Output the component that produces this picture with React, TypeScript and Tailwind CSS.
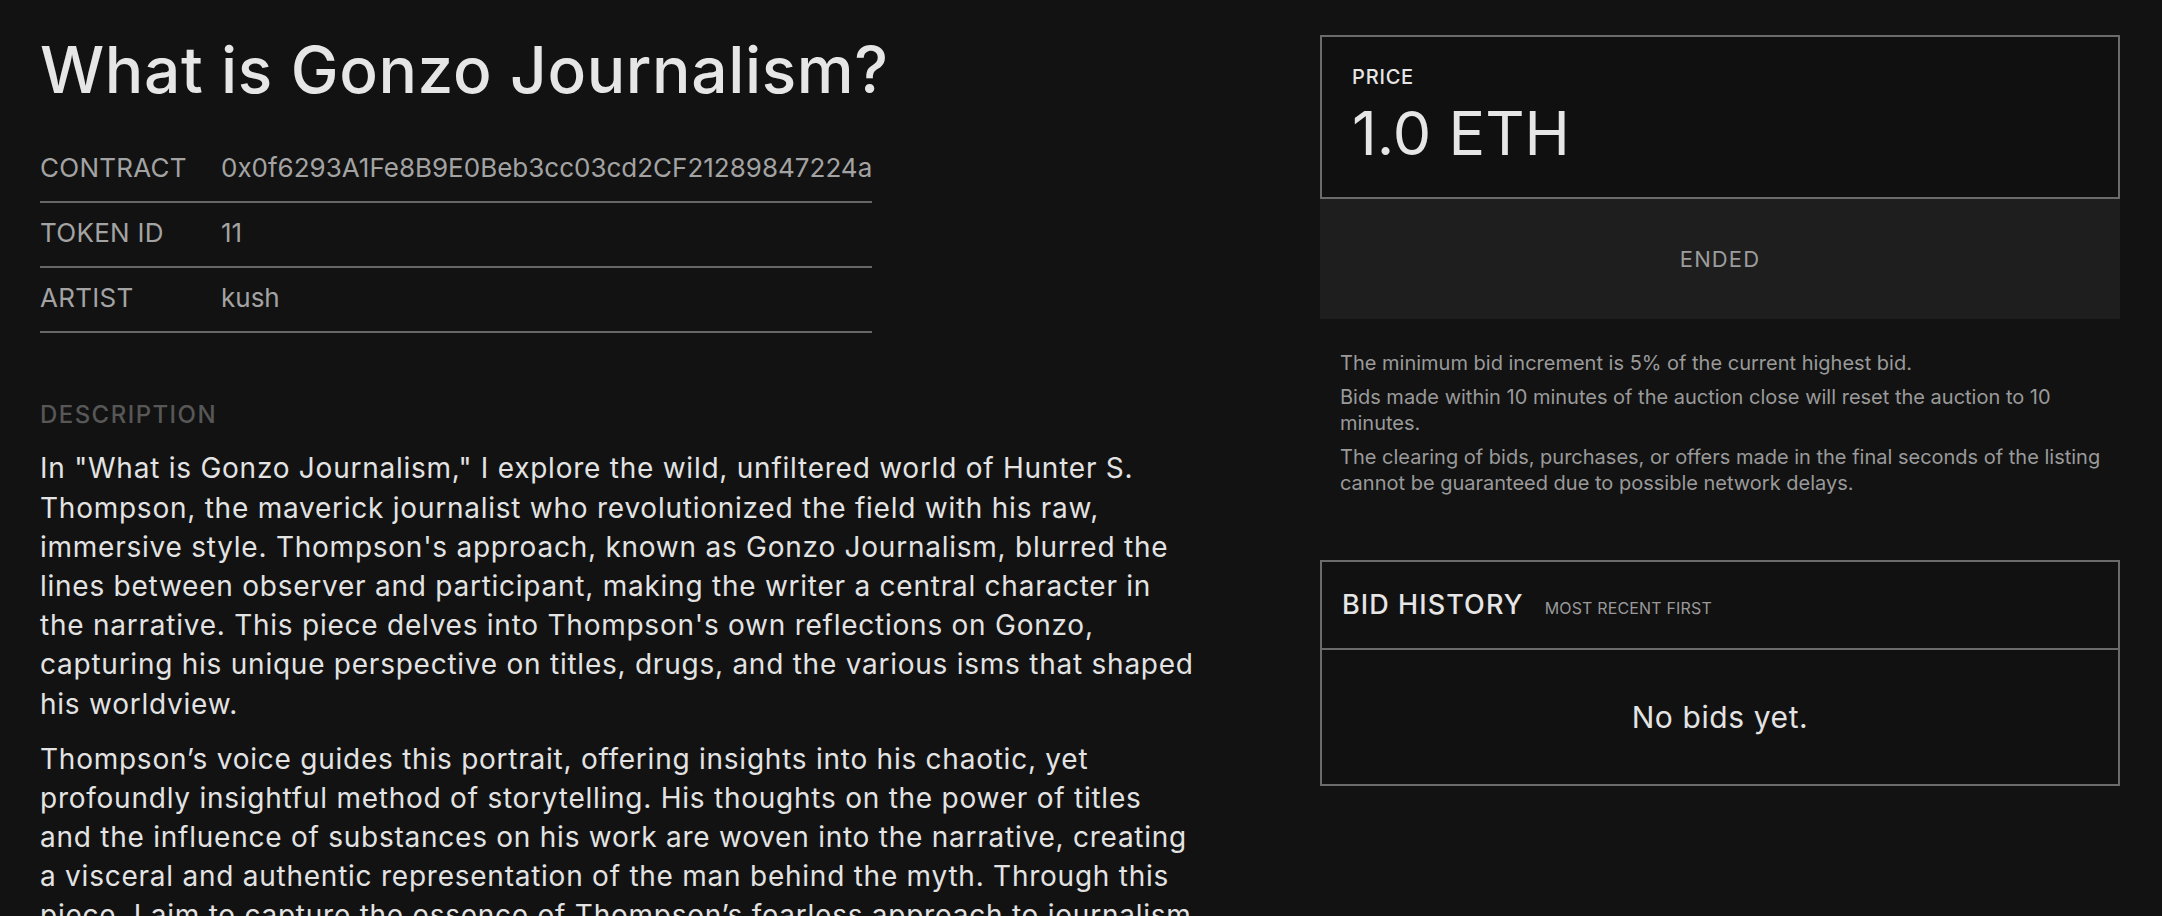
import React from 'react';

// Página de detalhe do leilão: título, metadados do token, descrição e
// painel lateral com preço, estado e histórico de lances.

const META: { label: string; value: string }[] = [
  { label: 'CONTRACT', value: '0x0f6293A1Fe8B9E0Beb3cc03cd2CF21289847224a' },
  { label: 'TOKEN ID', value: '11' },
  { label: 'ARTIST', value: 'kush' },
];

// Quebras de linha fixas, como no layout original da descrição.
const DESCRIPTION: string[][] = [
  [
    'In "What is Gonzo Journalism," I explore the wild, unfiltered world of Hunter S.',
    'Thompson, the maverick journalist who revolutionized the field with his raw,',
    'immersive style. Thompson\'s approach, known as Gonzo Journalism, blurred the',
    'lines between observer and participant, making the writer a central character in',
    'the narrative. This piece delves into Thompson\'s own reflections on Gonzo,',
    'capturing his unique perspective on titles, drugs, and the various isms that shaped',
    'his worldview.',
  ],
  [
    'Thompson\u2019s voice guides this portrait, offering insights into his chaotic, yet',
    'profoundly insightful method of storytelling. His thoughts on the power of titles',
    'and the influence of substances on his work are woven into the narrative, creating',
    'a visceral and authentic representation of the man behind the myth. Through this',
    'piece, I aim to capture the essence of Thompson\u2019s fearless approach to journalism',
    'and the enduring mark it left on the way stories are told.',
  ],
];

const NOTES = [
  'The minimum bid increment is 5% of the current highest bid.',
  'Bids made within 10 minutes of the auction close will reset the auction to 10 minutes.',
  'The clearing of bids, purchases, or offers made in the final seconds of the listing cannot be guaranteed due to possible network delays.',
];

const TokenDetails: React.FC = () => (
  <div className="flex-1 min-w-0">
    <h1 className="text-[64px] leading-[1.1] font-medium text-[#e6e6e6] tracking-[0.01em]">
      What is Gonzo Journalism?
    </h1>
    <div className="mt-[33px] w-fit">
      {META.map(row => (
        <div key={row.label} className="flex pt-[17px] pb-[20px] border-b-2 border-[#666] text-[26px] leading-[26px] text-[#a3a3a3]">
          <span className="w-[181px] shrink-0 tracking-[0.01em]">{row.label}</span>
          <span>{row.value}</span>
        </div>
      ))}
    </div>
    <h2 className="mt-[70px] text-[24px] leading-none font-medium tracking-[0.06em] text-[#575757]">DESCRIPTION</h2>
    <div className="mt-[22px] text-[28px] leading-[1.4] tracking-[0.027em] text-[#e3e3e3]">
      {DESCRIPTION.map((lines, i) => (
        <p key={i} className="mb-4 whitespace-nowrap">
          {lines.map((l, j) => (
            <React.Fragment key={j}>{l}{j < lines.length - 1 && <br />}</React.Fragment>
          ))}
        </p>
      ))}
    </div>
  </div>
);

const AuctionPanel: React.FC = () => (
  <aside className="w-[800px] shrink-0 pt-[35px]">
    <div className="border-2 border-[#6b6b6b] bg-[#101010] px-[30px] pt-[28px] pb-[33px]">
      <p className="text-[20px] leading-[24px] font-medium tracking-[0.04em] text-[#e6e6e6]">PRICE</p>
      <p className="mt-[14px] text-[61px] leading-none text-[#e6e6e6]">1.0 ETH</p>
    </div>
    <div className="h-[120px] bg-[#1e1e1e] flex items-center justify-center text-[22px] tracking-[0.05em] text-[#9c9c9c]">
      ENDED
    </div>
    <div className="mt-[31px] pl-[20px] pr-[10px] space-y-2">
      {NOTES.map(n => (
        <p key={n} className="text-[20px] leading-[26px] text-[#9a9a9a]">{n}</p>
      ))}
    </div>
    <div className="mt-[64px] border-2 border-[#6b6b6b] bg-[#111]">
      <div className="h-[88px] px-[20px] flex items-center border-b-2 border-[#6b6b6b]">
        <div className="flex items-baseline gap-[21px]">
          <span className="text-[27px] font-medium tracking-[0.04em] text-[#e6e6e6]">BID HISTORY</span>
          <span className="text-[16px] tracking-[0.01em] text-[#9a9a9a]">MOST RECENT FIRST</span>
        </div>
      </div>
      <div className="h-[134px] flex items-center justify-center text-[30px] tracking-[0.02em] text-[#e3e3e3]">
        No bids yet.
      </div>
    </div>
  </aside>
);

export default function App() {
  return (
    <div className="min-h-screen bg-[#121212] font-['Inter',sans-serif] antialiased">
      <div className="flex gap-[100px] pl-[40px] pr-[42px]">
        <div className="flex-1 min-w-0 pt-[35px]">
          <TokenDetails />
        </div>
        <AuctionPanel />
      </div>
    </div>
  );
}
